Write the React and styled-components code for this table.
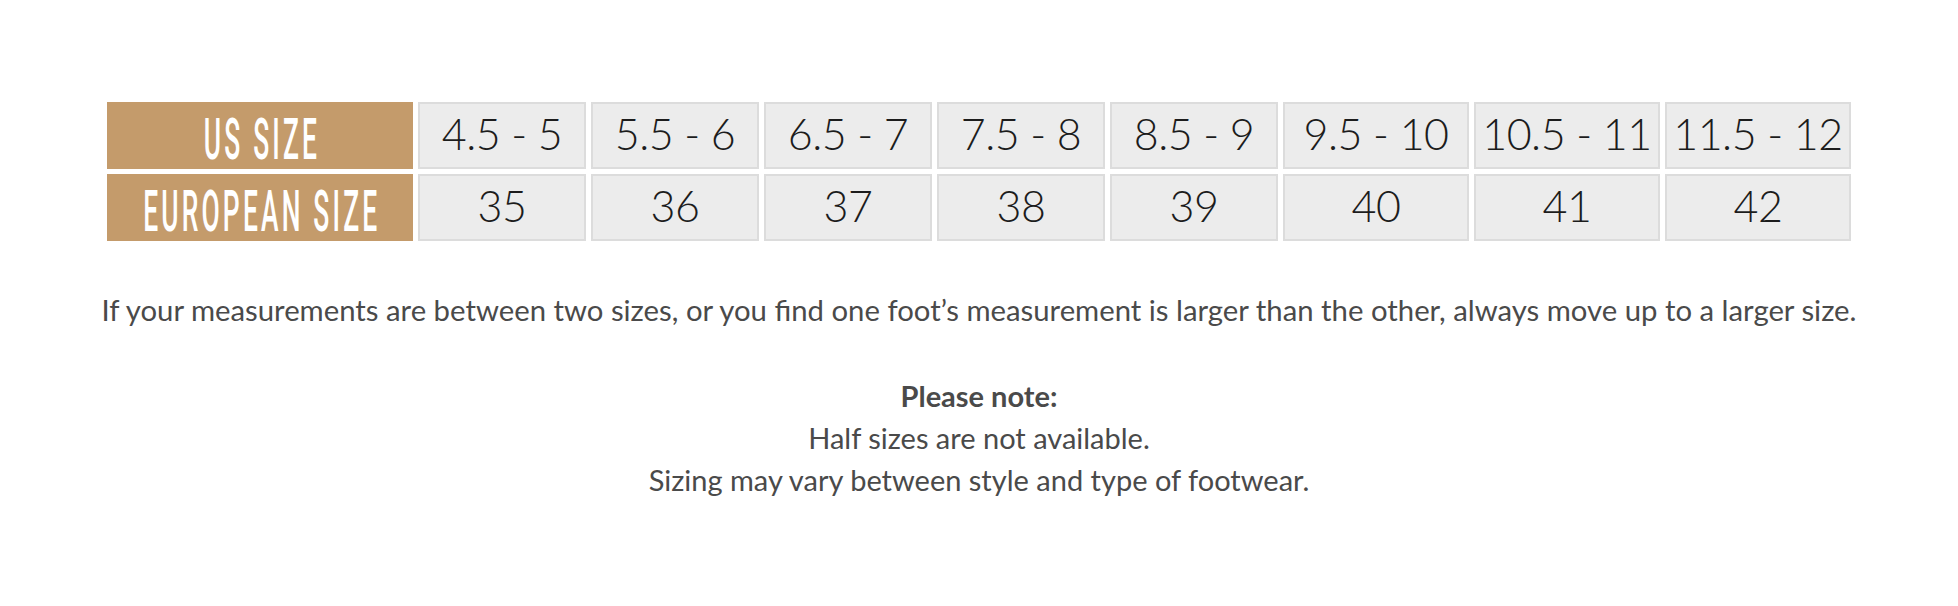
import React from "react";
import styled, { createGlobalStyle } from "styled-components";

const GlobalStyle = createGlobalStyle`
  body {
    margin: 0;
    background: #fff;
    font-family: Lato, "Open Sans", sans-serif;
  }
`;

const Page = styled.div`
  width: 1958px;
  height: 606px;
  padding-top: 102px;
  box-sizing: border-box;
  display: flex;
  flex-direction: column;
  align-items: center;
`;

const Table = styled.div`
  display: grid;
  grid-template-columns: 306px repeat(5, 168px) repeat(3, 186px);
  grid-auto-rows: 67px;
  column-gap: 5px;
  row-gap: 5px;
`;

const HeadCell = styled.div`
  background: #c49b6b;
  display: flex;
  align-items: center;
  justify-content: center;
`;

const HeadText = styled.span`
  display: inline-block;
  color: #fff;
  font-family: Roboto, "Liberation Sans", sans-serif;
  font-weight: 500;
  font-size: 58px;
  line-height: 1;
  letter-spacing: 7px;
  padding-left: 7px;
  white-space: nowrap;
  transform: scaleX(0.455);
  margin: 6px -200px 0;
`;

const Cell = styled.div`
  background: #ececec;
  border: 2px solid #dcdcdc;
  box-sizing: border-box;
  display: flex;
  align-items: center;
  justify-content: center;
  padding-bottom: 4px;
  color: #1c1c1c;
  font-family: Lato, "Open Sans", sans-serif;
  font-weight: 300;
  font-size: 43px;
  letter-spacing: -0.5px;
  white-space: nowrap;
`;

const Lead = styled.p`
  margin: 51px 0 0;
  color: #4a4a4a;
  font-size: 29.3px;
  line-height: 36px;
  text-align: center;
`;

const Note = styled.div`
  margin-top: 47px;
  color: #4a4a4a;
  font-size: 29px;
  line-height: 42px;
  text-align: center;
`;

const NoteTitle = styled.div`
  font-weight: 700;
`;

const usSizes = ["4.5 - 5", "5.5 - 6", "6.5 - 7", "7.5 - 8", "8.5 - 9", "9.5 - 10", "10.5 - 11", "11.5 - 12"];
const euSizes = ["35", "36", "37", "38", "39", "40", "41", "42"];

const App = () => (
  <>
    <GlobalStyle />
    <Page>
      <Table>
        <HeadCell>
          <HeadText>US SIZE</HeadText>
        </HeadCell>
        {usSizes.map((s) => (
          <Cell key={s}>{s}</Cell>
        ))}
        <HeadCell>
          <HeadText>EUROPEAN SIZE</HeadText>
        </HeadCell>
        {euSizes.map((s) => (
          <Cell key={s}>{s}</Cell>
        ))}
      </Table>
      <Lead>
        If your measurements are between two sizes, or you find one foot’s measurement is larger than the other, always move up to a larger size.
      </Lead>
      <Note>
        <NoteTitle>Please note:</NoteTitle>
        <div>Half sizes are not available.</div>
        <div>Sizing may vary between style and type of footwear.</div>
      </Note>
    </Page>
  </>
);

export default App;
